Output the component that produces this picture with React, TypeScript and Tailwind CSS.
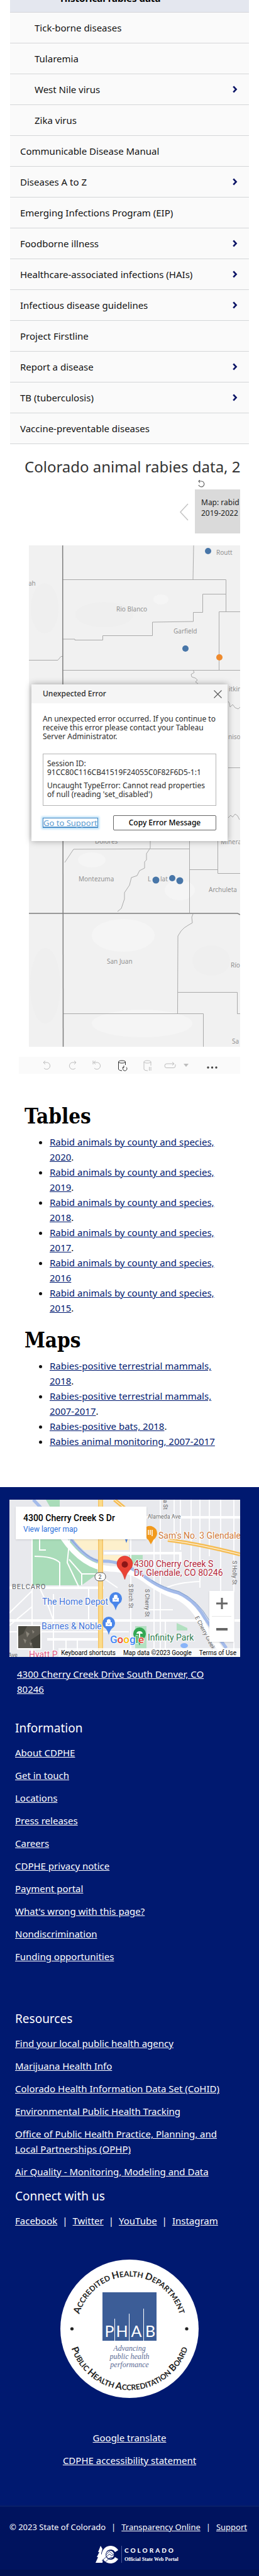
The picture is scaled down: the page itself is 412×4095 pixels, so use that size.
import type { ReactNode } from "react";

type NavItem = { label: string; nested?: boolean; arrow?: boolean };

const navItems: NavItem[] = [
  { label: "Tick-borne diseases", nested: true },
  { label: "Tularemia", nested: true },
  { label: "West Nile virus", nested: true, arrow: true },
  { label: "Zika virus", nested: true },
  { label: "Communicable Disease Manual" },
  { label: "Diseases A to Z", arrow: true },
  { label: "Emerging Infections Program (EIP)" },
  { label: "Foodborne illness", arrow: true },
  { label: "Healthcare-associated infections (HAIs)", arrow: true },
  { label: "Infectious disease guidelines", arrow: true },
  { label: "Project Firstline" },
  { label: "Report a disease", arrow: true },
  { label: "TB (tuberculosis)", arrow: true },
  { label: "Vaccine-preventable diseases" },
];

const tables = [
  { label: "Rabid animals by county and species, 2020", end: "." },
  { label: "Rabid animals by county and species, 2019", end: "." },
  { label: "Rabid animals by county and species, 2018", end: "." },
  { label: "Rabid animals by county and species, 2017", end: "." },
  { label: "Rabid animals by county and species, 2016", end: "" },
  { label: "Rabid animals by county and species, 2015", end: "." },
];

const maps = [
  { label: "Rabies-positive terrestrial mammals, 2018", end: "." },
  { label: "Rabies-positive terrestrial mammals, 2007-2017", end: "." },
  { label: "Rabies-positive bats, 2018", end: "." },
  { label: "Rabies animal monitoring, 2007-2017", end: "" },
];

const information = [
  "About CDPHE",
  "Get in touch",
  "Locations",
  "Press releases",
  "Careers",
  "CDPHE privacy notice",
  "Payment portal",
  "What's wrong with this page?",
  "Nondiscrimination",
  "Funding opportunities",
];

const resources = [
  "Find your local public health agency",
  "Marijuana Health Info",
  "Colorado Health Information Data Set (CoHID)",
  "Environmental Public Health Tracking",
  "Office of Public Health Practice, Planning, and Local Partnerships (OPHP)",
  "Air Quality - Monitoring, Modeling and Data",
];

function SideNav() {
  return (
    <nav className="mx-4 bg-[#fafafa]">
      <div className="flex h-5 items-end overflow-hidden border-b border-[#d4d4d8] bg-[#e4e7ef] pb-[10px] pl-20">
        <a href="#historical" className="font-bold leading-6 text-black">
          Historical rabies data
        </a>
      </div>
      <ul>
        {navItems.map((item) => (
          <li
            key={item.label}
            className="flex h-[49px] items-center justify-between border-b border-[#d4d6d8] pr-[18px]"
          >
            <a href="#nav" className={item.nested ? "pl-[39px]" : "pl-4"}>
              {item.label}
            </a>
            {item.arrow && (
              <button type="button" aria-label={"Expand " + item.label}>
                <svg width="8" height="12" viewBox="0 0 8 12" fill="none" stroke="#0b1466" strokeWidth="2.6">
                  <path d="M1.2 1.4 L5.6 6 L1.2 10.6" />
                </svg>
              </button>
            )}
          </li>
        ))}
      </ul>
    </nav>
  );
}

function CountyMap() {
  return (
    <svg
      className="block h-full w-full bg-[#f1f1f1]"
      viewBox="0 0 336 797"
      preserveAspectRatio="xMinYMin slice"
      role="img"
      aria-label="County map"
    >
      <g fill="#f5f5f5">
        <ellipse cx="210" cy="86" rx="12" ry="8" />
        <ellipse cx="150" cy="620" rx="50" ry="26" />
        <ellipse cx="180" cy="760" rx="80" ry="22" />
        <ellipse cx="240" cy="548" rx="24" ry="16" />
        <ellipse cx="100" cy="500" rx="22" ry="12" />
      </g>
      <g fill="#efefef">
        <ellipse cx="25" cy="100" rx="22" ry="40" />
        <ellipse cx="120" cy="110" rx="46" ry="20" />
        <ellipse cx="26" cy="700" rx="24" ry="60" />
        <ellipse cx="290" cy="660" rx="30" ry="24" />
      </g>
      <g fill="none" stroke="#aaaaaa" strokeWidth="1">
        <path d="M262 0 L261 54 M54 54.5 H313.5 V105.5 M336 105.5 H302.500 V198" />
        <path d="M313 77.500 H276.500 V106.500 H261.500 V121 L196.500 122 V143.500 H117.500 V150.500 H73 V149 H54" />
        <path d="M0 182.500 H46 L51 176.500 H54" />
        <path d="M54 198.500 H336" />
        <path d="M261 198 l2 4 l-5 3 l1 4 l6 2 l3 3 l-3 3 l4 3" />
        <path d="M317 248 l2 3 l1 6 l4 -4 l4 5 l5 2 l3 -3" />
        <path d="M317 353.500 H336 M317 433 l4 -4 l3 3 l4 -5 l4 3 l3 6" />
        <path d="M57 504 L71 483 L193 482.500 H255" />
        <path d="M193 468 l0 13 l-6 9 l0 10 l-3 3 l0 10 l-8 4 l-4 8 l-9 3 l-3 12 l-8 12 l0 10 l-5 15 l-6 5" />
        <path d="M255.500 468 V584 M255 515.500 H301 M300.500 468 V521.500 H336" />
        <path d="M261 586 l-2 5 l1 9 l-7 4 l-6 4 l-5 5 l-5 8 L236.500 745" />
        <path d="M237 710.500 H331.500 V744.500 H336 M54 744.500 H277.500 V797" />
      </g>
      <g fill="none" stroke="#7d7d7d" strokeWidth="1.500">
        <path d="M53.7 0 L54.500 797" />
        <path d="M0 585 H332 L336 587" />
      </g>
      <g fill="#929292" className="font-['Noto_Sans',sans-serif] text-[10px]">
        <text x="-1" y="64">ah</text>
        <text x="298" y="15">Routt</text>
        <text x="139" y="105">Rio Blanco</text>
        <text x="230" y="140">Garfield</text>
        <text x="318" y="232">itkin</text>
        <text x="317" y="308">nison</text>
        <text x="105" y="474">Dolores</text>
        <text x="305" y="475">Mineral</text>
        <text x="79" y="534">Montezuma</text>
        <text x="189" y="534">L</text>
        <text x="209" y="534">lat</text>
        <text x="286" y="551">Archuleta</text>
        <text x="124" y="665">San Juan</text>
        <text x="321" y="671">Río</text>
        <text x="323" y="792">Sa</text>
      </g>
      <g fill="#4876a8">
        <circle cx="285" cy="9" r="5" />
        <circle cx="249" cy="164" r="5" />
        <circle cx="202" cy="532" r="5.500" />
        <circle cx="228" cy="529" r="5" />
        <circle cx="240" cy="533" r="5.500" />
      </g>
      <circle cx="303" cy="178" r="5" fill="#ee8a2d" />
    </svg>
  );
}

function ErrorDialog() {
  return (
    <div
      role="dialog"
      aria-label="Unexpected Error"
      className="absolute left-1 right-5 top-[221px] h-[249px] bg-white text-[12px] leading-[14px] text-[#2b2b2b] shadow-[0_0_10px_rgba(0,0,0,0.35)]"
    >
      <div className="flex h-[30px] items-center justify-between bg-[#f5f5f5] pl-[18px] pr-[9px]">
        <h2 className="font-medium">Unexpected Error</h2>
        <button type="button" aria-label="Close">
          <svg width="13" height="13" viewBox="0 0 13 13" stroke="#555" strokeWidth="1.1">
            <path d="M0.500 0.500 L12.500 12.500 M12.500 0.500 L0.500 12.500" />
          </svg>
        </button>
      </div>
      <div className="px-[18px] pt-[18px]">
        <p>
          An unexpected error occurred. If you continue to
          <br />
          receive this error please contact your Tableau
          <br />
          Server Administrator.
        </p>
        <div className="mt-5 h-[83px] border border-[#b4b4b4] px-1.5 pt-2">
          <p>
            Session ID:
            <br />
            91CC80C116CB41519F24055C0F82F6D5-1:1
          </p>
          <p className="mt-[7px]">
            Uncaught TypeError: Cannot read properties
            <br />
            of null (reading 'set_disabled')
          </p>
        </div>
        <div className="mt-[15px] flex items-center justify-between">
          <a
            href="#support"
            className="border border-[#3f86c4] text-[13px] text-[#5b9bd0] underline shadow-[0_0_3px_2px_#b9dff7]"
          >
            Go to Support
          </a>
          <button
            type="button"
            className="h-6 w-[164px] rounded-[2px] border border-[#666] text-[12px] font-medium text-black"
          >
            Copy Error Message
          </button>
        </div>
      </div>
    </div>
  );
}

function ToolButton({ label, children }: { label: string; children: ReactNode }) {
  return (
    <button type="button" aria-label={label}>
      {children}
    </button>
  );
}

function Toolbar() {
  return (
    <div className="ml-[30px] mr-[30px] mt-4 flex h-[27px] items-center bg-[#fafafa] pl-[37px]">
      <div className="flex items-center gap-6 text-[#bdbdbd]">
        <ToolButton label="Undo">
          <svg width="16" height="16" viewBox="0 0 16 16" fill="none" stroke="currentColor">
            <path d="M2 3 H8.500 A5.500 5.500 0 1 1 3 12 M5 0.500 L2 3 L5 6" />
          </svg>
        </ToolButton>
        <ToolButton label="Redo">
          <svg width="16" height="16" viewBox="0 0 16 16" fill="none" stroke="currentColor">
            <path d="M14 3 H7.500 A5.500 5.500 0 1 0 13 12 M11 0.500 L14 3 L11 6" />
          </svg>
        </ToolButton>
        <ToolButton label="Revert">
          <svg width="16" height="16" viewBox="0 0 16 16" fill="none" stroke="currentColor">
            <path d="M2 3 H8.500 A5.500 5.500 0 1 1 3 12 M5 0.500 L2 3 L5 6 M1 0 V6" />
          </svg>
        </ToolButton>
        <ToolButton label="Refresh">
          <svg width="16" height="18" viewBox="0 0 16 18" fill="none" stroke="#333">
            <ellipse cx="7" cy="3" rx="5.500" ry="2" />
            <path d="M1.500 3 V15 Q3 17 7 17 M12.500 3 V8 M10 11 A3.300 3.300 0 1 0 14 11.500 M10 9 V12 H7.500" />
          </svg>
        </ToolButton>
        <ToolButton label="Pause">
          <svg width="16" height="18" viewBox="0 0 16 18" fill="none" stroke="currentColor">
            <ellipse cx="7.500" cy="3" rx="5.500" ry="2" />
            <path d="M2 3 V15 Q3 17 8 17 M13 3 V9 M10.500 11 V17 M13 11 V17" />
          </svg>
        </ToolButton>
      </div>
      <div className="ml-[18px] flex items-center gap-3 text-[#bdbdbd]">
        <ToolButton label="Replay">
          <svg width="19" height="12" viewBox="0 0 19 12" fill="none" stroke="currentColor">
            <path d="M4 3 H16 M13 0.500 L16 3 L13 5.500 M4 3 Q1 3 1 6.500 Q1 9.500 4 9.500 H15 Q18 9.500 18 6 V4" />
          </svg>
        </ToolButton>
        <ToolButton label="Replay options">
          <svg width="8" height="5" viewBox="0 0 8 5" fill="currentColor">
            <path d="M0 0 H8 L4 5 Z" />
          </svg>
        </ToolButton>
      </div>
      <div className="ml-[29px]">
        <ToolButton label="More">
          <svg width="18" height="4" viewBox="0 0 18 4" fill="#444">
            <circle cx="2" cy="2" r="1.700" />
            <circle cx="8.500" cy="2" r="1.700" />
            <circle cx="15" cy="2" r="1.700" />
          </svg>
        </ToolButton>
      </div>
    </div>
  );
}

function Viz() {
  return (
    <section className="text-[#333]">
      <div className="ml-[39px] mr-[30px] mt-5 overflow-hidden">
        <h1 className="whitespace-nowrap text-[24px] leading-8">Colorado animal rabies data, 2</h1>
      </div>
      <div className="mr-[30px] mt-px flex items-end justify-end gap-2.5">
        <button type="button" aria-label="Previous" className="mb-5">
          <svg width="14" height="28" viewBox="0 0 14 28" fill="none" stroke="#c4c4c4" strokeWidth="1.500">
            <path d="M13 1 L1 14 L13 27" />
          </svg>
        </button>
        <div className="w-[72px]">
          <button type="button" aria-label="Reset" className="ml-1 block h-[19px]">
            <svg width="12" height="12" viewBox="0 0 12 12" fill="none" stroke="#666" strokeWidth="1.200">
              <path d="M2 2 H7 A4.500 4.500 0 1 1 2 8 M4 0 L2 2 L4 4.500" />
            </svg>
          </button>
          <button
            type="button"
            className="block h-[70px] w-full overflow-hidden whitespace-nowrap bg-[#dadada] pb-3 pl-2.5 text-left text-[12px] leading-[17px] text-[#222]"
          >
            Map: rabid
            <br />
            2019-2022
          </button>
        </div>
      </div>
      <div className="relative ml-[46px] mr-[30px] mt-[19px] h-[797px]">
        <CountyMap />
        <ErrorDialog />
      </div>
      <Toolbar />
    </section>
  );
}

function LinkList({ title, items }: { title: string; items: { label: string; end: string }[] }) {
  return (
    <section>
      <h2 className="font-['DejaVu_Serif_Condensed','DejaVu_Serif',serif] text-[33px] font-bold leading-10 text-black">
        {title}
      </h2>
      <ul className="mt-2 list-disc pl-10 pr-4 leading-6">
        {items.map((item) => (
          <li key={item.label}>
            <a href="#file" className="text-[#001970] underline">
              {item.label}
            </a>
            {item.end}
          </li>
        ))}
      </ul>
    </section>
  );
}

function StreetMap() {
  return (
    <svg
      className="block h-full w-full bg-[#e8e9ed] font-['Roboto',sans-serif] text-[13px]"
      viewBox="0 0 367 250"
      preserveAspectRatio="xMinYMin slice"
      role="img"
      aria-label="Street map around 4300 Cherry Creek S Dr"
    >
      <path d="M35 60 H96 Q112 86 140 100 V118 L115 136 H35 Z M58 0 H80 V14 H66 Z" fill="#a9dcb9" />
      <path d="M190 88 H212 V102 H195 Z M200 201 H218 V237 H200 Z M266 196 L283 204 V208 H266 Z" fill="#b2e0c0" />
      <path d="M95 60 H190 V80 H118 Z" fill="#fdf0cc" />
      <path d="M148 88 H180 V100 H148 Z" fill="#fdf0cc" />
      <g fill="none" stroke="#fff" strokeWidth="2">
        <path d="M240 0 V250 M272 0 V80 M303 0 V140 M336 0 V145 M357 0 V250 M230 60 V250 M193 60 V250 M262 0 V120 M289 0 V110 M318 0 V90 M248 190 V250" opacity="0.9" />
        <path d="M218 28 H367 M150 85 H272 V104 M0 140 H150 M0 192 H367 M60 222 H142" strokeWidth="4" />
        <path d="M36 60 V250 M40 90 Q70 90 80 100 V138 M48 60 V80 H58 M70 150 V250 M90 222 V250 M108 222 V250 M126 140 V190 M0 210 H190 M95 95 L115 118 H140 M115 118 V136 M96 60 L92 100 L110 138 M250 140 Q265 132 303 130 M303 60 V130 M0 180 L36 145 M0 200 L36 170 M48 140 L62 170 L70 192 M215 175 H260 M150 125 L172 140" />
        <path d="M85 60 Q118 108 160 110 Q190 110 214 126 Q240 146 266 154 Q292 166 310 202 L340 244" strokeWidth="9" />
      </g>
      <path d="M38 0 L55 18 M96 60 Q124 98 146 98 Q176 96 212 120 Q240 142 268 148 Q296 160 312 190 L345 236" fill="none" stroke="#a4bbea" strokeWidth="5" />
      <path d="M94 58 Q124 96 146 98 M226 128 Q245 140 270 146 Q300 160 318 192" fill="none" stroke="#7c9bc9" strokeWidth="1" />
      <path d="M145 0 V240" stroke="#f4c467" strokeWidth="8" />
      <path d="M145 0 V240" stroke="#fbdb8b" strokeWidth="5" />
      <path d="M167 0 L184 14 M252 64 Q300 70 367 87" fill="none" stroke="#f5bd55" strokeWidth="6" />
      <path d="M167 0 L184 14 M252 64 Q300 70 367 87" fill="none" stroke="#fff" strokeWidth="1" />
      <rect x="136" y="116" width="17" height="13" rx="6" fill="#fff" stroke="#555" />
      <text x="141.500" y="126" className="text-[9px]" fill="#444">2</text>
      <ellipse cx="278" cy="232" rx="6" ry="4" fill="#8ab4f8" />

      <g fill="#666" className="text-[9px]">
        <text x="220" y="30">Alameda Ave</text>
        <text transform="translate(245 0) rotate(90)" x="-2" y="0">ia St</text>
        <text transform="translate(190 134) rotate(90)">S Birch St</text>
        <text transform="translate(216 142) rotate(90)">S Cherry St</text>
        <text transform="translate(355 97) rotate(90)">S Holly St</text>
        <text transform="translate(295 187) rotate(62)">E Cherry Creek</text>
        <text x="-2" y="250">Ave</text>
      </g>
      <text x="4" y="142" fill="#5f6368" className="text-[11px] tracking-[1px]">BELCARO</text>

      <path d="M218 43 Q222 41 226 42 Q235 45 235 54 Q234 60 229 64 L225 71 L221 64 Q218 62 218 60 Z" fill="#f29a1c" />
      <path d="M221 48 V56 M224 48 V56 M227 48 V58" stroke="#fff" strokeWidth="1.500" />
      <path d="M184 63 H188 L186 69 Z" fill="#4b7fdb" />
      <path d="M183.500 127 Q181 117 175 111 Q171 107 171 102 A12.500 12.500 0 0 1 196 102 Q196 107 192 111 Q186 117 183.500 127 Z" fill="#ea4335" stroke="#c5221f" strokeWidth="0.500" />
      <circle cx="183.500" cy="103" r="5" fill="#8c1616" />
      {[
        { x: 169, y: 158 },
        { x: 158, y: 197 },
      ].map((pin) => (
        <g key={pin.y} transform={`translate(${pin.x} ${pin.y})`}>
          <path d="M0 18 Q-2 10 -6 7 Q-10 4 -10 -1 A10 10 0 0 1 10 -1 Q10 4 6 7 Q2 10 0 18 Z" fill="#4a86ea" />
          <path d="M-5 -2 H5 V4 H-5 Z M-3 -2 V-4 A3 3 0 0 1 3 -4 V-2" fill="#fff" />
          <path d="M-2 0 Q0 3 2 0" fill="none" stroke="#4a86ea" />
        </g>
      ))}
      <g transform="translate(207 214)">
        <path d="M0 18 Q-2 10 -6 7 Q-10 4 -10 -1 A10 10 0 0 1 10 -1 Q10 4 6 7 Q2 10 0 18 Z" fill="#34a853" />
        <path d="M-5 -1 A5 4 0 0 1 5 -1 Z M-1 -1 V5 H1 V-1 Z" fill="#fff" />
      </g>

      <g className="text-[14px]" stroke="#fff" strokeWidth="2" paintOrder="stroke">
        <text x="237" y="62" fill="#cf7a3a">Sam's No. 3 Glendale</text>
        <g fill="#b3263a">
          <text x="198" y="107">4300 Cherry Creek S</text>
          <text x="198" y="121">Dr, Glendale, CO 80246</text>
        </g>
        <text x="52" y="167" fill="#3f73d8">The Home Depot</text>
        <text x="51" y="206" fill="#3f73d8">Barnes &amp; Noble</text>
        <text x="220" y="224" fill="#2f7d4f">Infinity Park</text>
        <text x="31" y="251" fill="#e0567f">Hyatt P</text>
      </g>
      <text x="160" y="228" className="text-[17px] font-medium" stroke="#fff" strokeWidth="1.500" paintOrder="stroke">
        <tspan fill="#4285f4">G</tspan>
        <tspan fill="#ea4335">o</tspan>
        <tspan fill="#fbbc04">o</tspan>
        <tspan fill="#4285f4">g</tspan>
        <tspan fill="#34a853">l</tspan>
        <tspan fill="#ea4335">e</tspan>
      </text>
    </svg>
  );
}

function LocationMap() {
  return (
    <div className="relative ml-[15px] mr-[30px] h-[250px] overflow-hidden font-['Roboto',sans-serif]">
      <StreetMap />
      <div className="absolute left-2.5 top-[11px] h-[52px] w-[208px] bg-white pl-3 pt-2 shadow">
        <p className="text-[14px] font-medium leading-5 text-black">4300 Cherry Creek S Dr</p>
        <a href="#larger" className="block text-[12px] leading-4 text-[#2a6fdb]">
          View larger map
        </a>
      </div>
      <div className="absolute bottom-[24px] right-2.5 flex w-[39px] flex-col bg-white shadow">
        <button type="button" aria-label="Zoom in" className="flex h-10 items-center justify-center">
          <svg width="18" height="18" viewBox="0 0 18 18" fill="#666">
            <path d="M7.500 0 H10.500 V7.500 H18 V10.500 H10.500 V18 H7.500 V10.500 H0 V7.500 H7.500 Z" />
          </svg>
        </button>
        <span className="mx-1 h-px bg-[#e6e6e6]" />
        <button type="button" aria-label="Zoom out" className="flex h-10 items-center justify-center">
          <svg width="18" height="4" viewBox="0 0 18 4" fill="#666">
            <path d="M0 0 H18 V4 H0 Z" />
          </svg>
        </button>
      </div>
      <button
        type="button"
        aria-label="Satellite imagery"
        className="absolute bottom-3 left-3 h-[39px] w-[39px] border-2 border-white bg-[#5d5a52]"
      >
        <svg className="h-full w-full" viewBox="0 0 35 35">
          <path d="M0 0 H14 L8 12 L0 16 Z M20 22 L35 12 V35 H24 Z" fill="#45443c" />
          <path d="M12 8 l6 4 l-4 6 z M8 20 l5 2 l-2 6 z M22 6 l4 3 l-3 3 z M18 26 l4 1 l-2 5 z" fill="#8a857b" />
        </svg>
      </button>
      <div className="absolute bottom-0 right-0 flex h-[14px] items-center gap-3 bg-white/75 pl-1 pr-1.5 text-[10px] text-black">
        <button type="button">Keyboard shortcuts</button>
        <span>Map data ©2023 Google</span>
        <a href="#terms">Terms of Use</a>
      </div>
    </div>
  );
}

function Seal() {
  return (
    <svg width="220" height="220" viewBox="0 0 220 220" role="img" aria-label="Accredited health department seal">
      <defs>
        <path id="seal-top" d="M27 110 A83 83 0 0 1 193 110" />
        <path id="seal-bottom" d="M12.500 110 A97.500 97.500 0 0 0 207.500 110" />
      </defs>
      <circle cx="110" cy="110" r="110" fill="#fff" />
      <g className="font-['Lato',sans-serif] text-[12px] font-bold" fill="#222" textAnchor="middle">
        <text>
          <textPath href="#seal-top" startOffset="50%">
            <tspan className="text-[15px]">A</tspan>CCREDITED <tspan className="text-[15px]">H</tspan>EALTH{" "}
            <tspan className="text-[15px]">D</tspan>EPARTMENT
          </textPath>
        </text>
        <text>
          <textPath href="#seal-bottom" startOffset="50%">
            <tspan className="text-[15px]">P</tspan>UBLIC <tspan className="text-[15px]">H</tspan>EALTH{" "}
            <tspan className="text-[15px]">A</tspan>CCREDITATION <tspan className="text-[15px]">B</tspan>OARD
          </textPath>
        </text>
      </g>
      <circle cx="18.500" cy="110" r="2.600" fill="#222" />
      <circle cx="201" cy="110" r="2.600" fill="#222" />
      <rect x="67" y="52" width="86" height="77" fill="#3c5d97" />
      <path d="M86.500 94 V129 M109.500 86 V129 M132.500 78 V129" stroke="#fff" strokeWidth="1" />
      <g className="font-['Lato',sans-serif] text-[25px]" fill="#fff" textAnchor="middle">
        <text x="78" y="123">P</text>
        <text x="98" y="123">H</text>
        <text x="121" y="123">A</text>
        <text x="143" y="123">B</text>
      </g>
      <g className="font-['Liberation_Serif',serif] text-[12px] italic" fill="#5a6a94" textAnchor="middle">
        <text x="110" y="145">Advancing</text>
        <text x="110" y="158">public health</text>
        <text x="110" y="171">performance</text>
      </g>
    </svg>
  );
}

function StateLogo() {
  return (
    <svg width="136" height="28" viewBox="0 0 136 28" role="img" aria-label="Colorado Official State Web Portal">
      <path d="M8 0 L11 5 L9 12 L12 20 L11 27 H0 L4 18 L2 18 L6 10 L4 10 Z" fill="#fff" />
      <path d="M36 7 L31 10 A8 8 0 1 0 31 18 L36 21 A14 14 0 1 1 36 7 Z" fill="#fff" />
      <circle cx="23" cy="14" r="6.500" fill="#fff" stroke="#00135e" strokeWidth="0.700" />
      <path d="M10 24 L22 13 L26 16 L36 9 M14 27 L24 18 L30 20 M17 14 L22 9 L28 14" fill="none" stroke="#00135e" strokeWidth="0.800" />
      <path d="M41.500 0 V27" stroke="#4f5c9c" strokeWidth="1" />
      <text x="46" y="11" fill="#fff" className="font-['Lato',sans-serif] text-[10px] font-black tracking-[3px]">
        COLORADO
      </text>
      <text x="46" y="24" fill="#fff" className="font-['Liberation_Serif',serif] text-[8px] font-bold">
        Official State Web Portal
      </text>
    </svg>
  );
}

function FooterLinks({ title, items }: { title: string; items: string[] }) {
  return (
    <section>
      <h2 className="text-[19px] leading-6">{title}</h2>
      <ul className="mt-[15px] flex flex-col gap-3 leading-6">
        {items.map((item) => (
          <li key={item}>
            <a href="#footer" className="underline">
              {item}
            </a>
          </li>
        ))}
      </ul>
    </section>
  );
}

function Footer() {
  return (
    <footer className="mt-[61px] bg-[#001970] pt-5 text-white">
      <LocationMap />
      <p className="ml-[27px] mr-16 mt-[15px] leading-6">
        <a href="#directions" className="underline">
          4300 Cherry Creek Drive South Denver, CO 80246
        </a>
      </p>
      <div className="ml-6 mr-8 mt-[38px]">
        <FooterLinks title="Information" items={information} />
        <div className="mt-[75px]">
          <FooterLinks title="Resources" items={resources} />
        </div>
        <h2 className="mt-[15px] text-[19px] leading-6">Connect with us</h2>
        <p className="mt-[15px] flex gap-2 leading-6">
          <a href="#facebook" className="underline">Facebook</a>
          <span>|</span>
          <a href="#twitter" className="underline">Twitter</a>
          <span>|</span>
          <a href="#youtube" className="underline">YouTube</a>
          <span>|</span>
          <a href="#instagram" className="underline">Instagram</a>
        </p>
      </div>
      <div className="mt-[50px] flex flex-col items-center">
        <Seal />
        <a href="#translate" className="mt-[51px] leading-6 underline">Google translate</a>
        <a href="#accessibility" className="mt-3 leading-6 underline">CDPHE accessibility statement</a>
      </div>
      <div className="mt-[60px] border-t-2 border-[#0a2068] bg-[#00135e] pb-2.5 pt-5">
        <p className="flex justify-center gap-[9px] pr-1 text-[13px] leading-6">
          <span>© 2023 State of Colorado</span>
          <span>|</span>
          <a href="#transparency" className="underline">Transparency Online</a>
          <span>|</span>
          <a href="#support-page" className="underline">Support</a>
        </p>
        <div className="mt-[18px] flex justify-center pl-7">
          <StateLogo />
        </div>
      </div>
      <div className="h-2.5 bg-[#001150]" />
    </footer>
  );
}

export default function App() {
  return (
    <div className="overflow-hidden bg-white font-['Noto_Sans',sans-serif] text-[15px] text-[#111]">
      <SideNav />
      <Viz />
      <main className="ml-[39px] mr-5 mt-12 flex flex-col gap-5">
        <LinkList title="Tables" items={tables} />
        <LinkList title="Maps" items={maps} />
      </main>
      <Footer />
    </div>
  );
}
